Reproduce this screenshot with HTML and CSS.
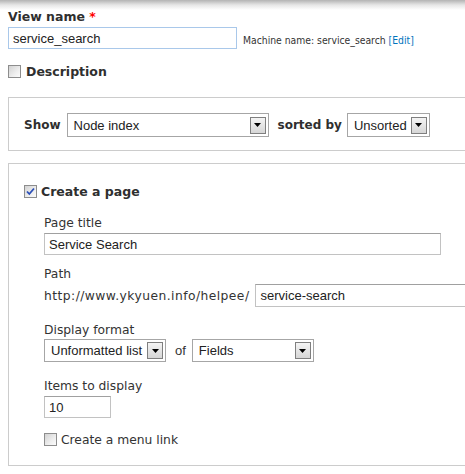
FILE: index.html
```html
<!DOCTYPE html>
<html>
<head>
<meta charset="utf-8">
<title>Views</title>
<link rel="stylesheet" href="styles.css">
</head>
<body>
<div class="page">
  <div class="lbl-bold name-label">View name <span class="req">*</span></div>
  <div class="name-row">
    <input class="text-input name-input" type="text" value="service_search">
    <span class="machine">Machine name: service_search <a class="edit">[Edit]</a></span>
  </div>

  <div class="check-row desc-row">
    <span class="cb"></span>
    <span class="lbl-bold">Description</span>
  </div>

  <div class="fs fs-show">
    <div class="show-row">
      <span class="lbl-show">Show</span>
      <div class="sel sel-node"><span class="sel-text">Node index</span><span class="sel-btn"><svg width="7" height="4" viewBox="0 0 7 4"><path d="M0 0H7L3.5 4Z" fill="#000"/></svg></span></div>
      <span class="lbl-show sorted">sorted by</span>
      <div class="sel sel-sort"><span class="sel-text">Unsorted</span><span class="sel-btn"><svg width="7" height="4" viewBox="0 0 7 4"><path d="M0 0H7L3.5 4Z" fill="#000"/></svg></span></div>
    </div>
  </div>

  <div class="fs fs-page">
    <div class="check-row page-row">
      <span class="cb checked"><svg width="11" height="11" viewBox="0 0 11 11"><path d="M2 5.5L4.3 8L9 2.5" fill="none" stroke="#2b4fb8" stroke-width="1.8"/></svg></span>
      <span class="lbl-bold">Create a page</span>
    </div>
    <div class="sub">
      <div class="lbl lbl-title">Page title</div>
      <input class="text-input title-input" type="text" value="Service Search">

      <div class="lbl lbl-path">Path</div>
      <div class="path-row">
        <span class="path-prefix">http://www.ykyuen.info/helpee/</span>
        <input class="text-input path-input" type="text" value="service-search">
      </div>

      <div class="lbl lbl-format">Display format</div>
      <div class="format-row">
        <div class="sel sel-format"><span class="sel-text">Unformatted list</span><span class="sel-btn"><svg width="7" height="4" viewBox="0 0 7 4"><path d="M0 0H7L3.5 4Z" fill="#000"/></svg></span></div>
        <span class="of">of</span>
        <div class="sel sel-fields"><span class="sel-text">Fields</span><span class="sel-btn"><svg width="7" height="4" viewBox="0 0 7 4"><path d="M0 0H7L3.5 4Z" fill="#000"/></svg></span></div>
      </div>

      <div class="lbl lbl-items">Items to display</div>
      <input class="text-input items-input" type="text" value="10">

      <div class="check-row menu-row">
        <span class="cb"></span>
        <span class="lbl">Create a menu link</span>
      </div>
    </div>
  </div>
</div>
</body>
</html>
```

FILE: styles.css
```css
html, body {
  margin: 0;
  padding: 0;
  overflow: hidden;
}
body {
  width: 465px;
  height: 474px;
  background: #fff linear-gradient(#b3b3b3 0, #e6e6e6 5px, #fff 10px) no-repeat;
  background-size: 100% 10px;
  font-family: "DejaVu Sans", Verdana, sans-serif;
  color: #333;
}
.page {
  width: 457px;
  padding: 9px 0 0 8px;
}
.lbl-bold {
  font-weight: bold;
  font-size: 12.5px;
  line-height: 16px;
  color: #2f2f2f;
}
.req {
  color: #f00;
}
.name-row {
  display: flex;
  align-items: center;
  margin-top: 2px;
}
.text-input {
  box-sizing: border-box;
  margin: 0;
  height: 22px;
  padding: 0 4px;
  font-family: "Liberation Sans", Arial, sans-serif;
  font-size: 13px;
  color: #222;
  background: #fff;
  border: 1px solid #c2c2c2;
  border-top-color: #a0a0a0;
  outline: none;
}
.name-input {
  width: 229px;
  border: 1px solid #a9c8ea;
  padding-left: 4px;
}
.machine {
  margin-left: 6px;
  margin-top: 3px;
  font-family: "DejaVu Sans Condensed", "DejaVu Sans", sans-serif;
  font-size: 10.3px;
  color: #333;
}
.edit {
  color: #0074bd;
}
.check-row {
  display: flex;
  align-items: flex-start;
}
.cb {
  box-sizing: border-box;
  width: 13px;
  height: 13px;
  flex: none;
  border: 1px solid #8d8d8d;
  background: linear-gradient(135deg, #d2d2d2 0%, #eeeeee 60%, #fbfbfb 100%);
  display: flex;
  align-items: center;
  justify-content: center;
}
.desc-row {
  margin-top: 15px;
}
.desc-row .cb {
  margin-top: 1px;
  margin-right: 5px;
}
.fs {
  border: 1px solid #cccccc;
  border-right: none;
  overflow: hidden;
}
.fs-show {
  margin-top: 17px;
  padding: 15px 0 13px 15px;
}
.show-row {
  display: flex;
  align-items: center;
}
.lbl-show {
  font-weight: bold;
  font-size: 12px;
  color: #2f2f2f;
}
.sorted {
  margin-left: 9px;
}
.sel {
  box-sizing: border-box;
  height: 24px;
  display: flex;
  align-items: center;
  justify-content: space-between;
  border: 1px solid #a6a6a6;
  background: #fff;
  padding: 0 2px 0 6px;
  font-family: "Liberation Sans", Arial, sans-serif;
  font-size: 13px;
  color: #222;
}
.sel-btn {
  box-sizing: border-box;
  width: 16px;
  height: 17px;
  border: 1px solid #7f7f7f;
  background: linear-gradient(#f4f4f4, #d6d6d6);
  display: flex;
  align-items: center;
  justify-content: center;
}
.sel-node {
  width: 202px;
  margin-left: 6px;
}
.sel-sort {
  width: 83px;
  margin-left: 5px;
}
.fs-page {
  margin-top: 12px;
  padding: 20px 0 17px 15px;
}
.page-row .cb {
  margin-top: 1px;
  margin-right: 4px;
}
.sub {
  margin-left: 20px;
}
.lbl {
  font-size: 12.3px;
  line-height: 15px;
  color: #333;
}
.lbl-title {
  margin-top: 16px;
  margin-bottom: 2px;
}
.title-input {
  display: block;
  width: 397px;
}
.lbl-path {
  margin-top: 12px;
  margin-bottom: 2px;
}
.path-row {
  display: flex;
  align-items: center;
}
.path-prefix {
  font-size: 12.3px;
  letter-spacing: 0.45px;
  color: #333;
  flex: none;
}
.path-input {
  height: 23px;
  flex: 1;
  min-width: 0;
  margin-left: 6px;
  border-right: none;
}
.lbl-format {
  margin-top: 16px;
  margin-bottom: 1px;
}
.format-row {
  display: flex;
  align-items: center;
}
.format-row .sel {
  height: 23px;
}
.sel-format {
  width: 122px;
  padding-left: 6px;
}
.of {
  margin-left: 9px;
  font-family: "Liberation Sans", Arial, sans-serif;
  font-size: 13px;
  color: #333;
}
.sel-fields {
  width: 122px;
  margin-left: 6px;
}
.lbl-items {
  margin-top: 17px;
  margin-bottom: 2px;
}
.items-input {
  display: block;
  width: 67px;
}
.menu-row {
  margin-top: 15px;
}
.menu-row .cb {
  margin-right: 4px;
}
```
